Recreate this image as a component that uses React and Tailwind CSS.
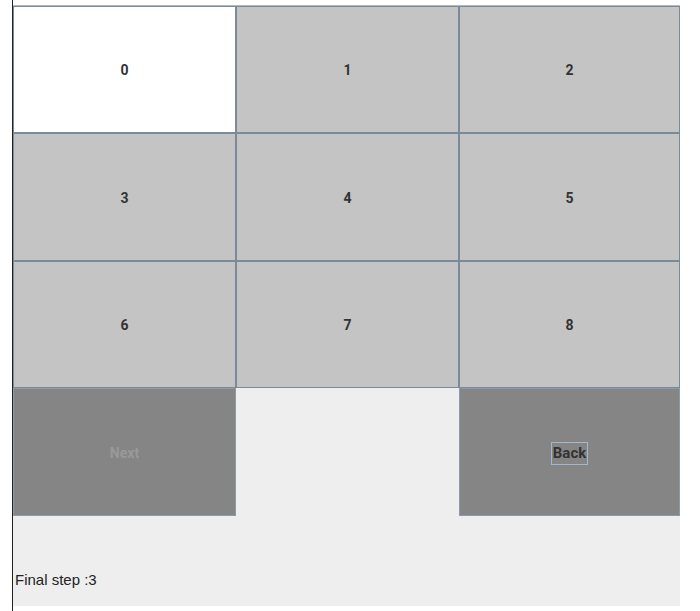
export default function App() {
  const cells = ["0", "1", "2", "3", "4", "5", "6", "7", "8"];
  return (
    <div className="w-[700px] h-[611px] bg-white flex" style={{ fontFamily: "Roboto, 'Liberation Sans', sans-serif" }}>
      <div className="w-[12px] shrink-0" />
      <div className="w-px shrink-0 bg-[#222]" />
      <div className="w-[667px] shrink-0 flex flex-col">
        <div className="h-[5px] bg-white" />
        <div className="h-px bg-[#b8b8b8]" />
        <div className="grid grid-cols-[223px_223px_221px] grid-rows-[127px_128px_127px_128px] bg-[#eeeeee]">
          {cells.map((c) => (
            <div
              key={c}
              className={`flex items-center justify-center border border-[#7a8a99] pt-[2px] text-[14px] font-bold text-[#333] ${c === "0" ? "bg-white" : "bg-[#c4c4c4]"}`}
            >
              {c}
            </div>
          ))}
          <div className="flex items-center justify-center border border-[#8f9aa4] bg-[#858585] pt-[2px] text-[14px] font-bold text-[#999999]">
            Next
          </div>
          <div className="bg-[#eeeeee]" />
          <div className="flex items-center justify-center border border-[#8a9aab] bg-[#858585] pt-[2px]">
            <span className="border border-[#a3b8cc] px-px text-[15px] font-bold leading-[21px] text-[#333]">Back</span>
          </div>
        </div>
        <div className="h-[90px] bg-[#eeeeee] flex items-end pb-[18px] pl-[2px]">
          <span className="text-[15px] leading-[16px] text-[#222]" style={{ fontFamily: "'Liberation Sans', Arial, sans-serif" }}>Final step :3</span>
        </div>
      </div>
    </div>
  );
}
